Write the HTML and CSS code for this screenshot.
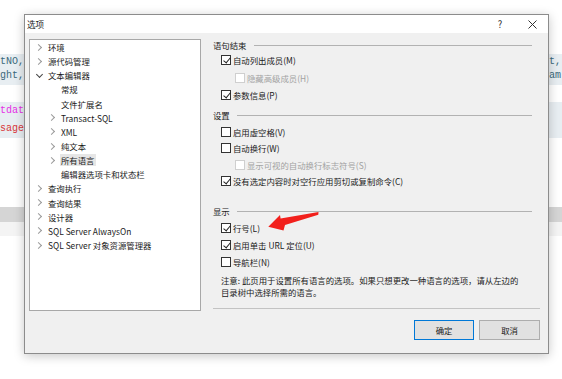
FILE: index.html
```html
<!DOCTYPE html>
<html lang="zh-CN">
<head>
    <meta charset="UTF-8">
    <title>选项</title>
    <link rel="stylesheet" href="styles.css">
</head>
<body>
    <!-- 背后的编辑器 -->
    <div class="editor">
        <div class="band band-a">
            <div class="line"><span class="l teal">tNO,</span><span></span><span class="r teal">t,</span></div>
            <div class="line"><span class="l teal">ght,</span><span></span><span class="r teal">am</span></div>
        </div>
        <div class="band band-b">
            <div class="line"><span class="l pink">tdat</span><span></span><span class="r"></span></div>
            <div class="line"><span class="l red">sage</span><span></span><span class="r"></span></div>
        </div>
        <div class="strip"></div>
        <div class="strip-light"></div>
    </div>

    <div class="dialog">
        <div class="titlebar">
            <span class="title">选项</span>
            <span class="tb-btn">?</span>
            <span class="tb-btn">
                <svg width="9" height="9" viewBox="0 0 9 9"><path d="M0.5 0.5 L8.5 8.5 M8.5 0.5 L0.5 8.5" stroke="#333" stroke-width="1" fill="none"/></svg>
            </span>
        </div>
        <div class="dlg-body">
            <div class="tree">
                <div class="node"><i class="arr"></i><span>环境</span></div>
                <div class="node"><i class="arr"></i><span>源代码管理</span></div>
                <div class="node"><i class="arr open"></i><span>文本编辑器</span></div>
                <div class="node child"><i class="arr none"></i><span>常规</span></div>
                <div class="node child"><i class="arr none"></i><span>文件扩展名</span></div>
                <div class="node child"><i class="arr"></i><span>Transact-SQL</span></div>
                <div class="node child"><i class="arr"></i><span>XML</span></div>
                <div class="node child"><i class="arr"></i><span>纯文本</span></div>
                <div class="node child"><i class="arr"></i><span class="sel">所有语言</span></div>
                <div class="node child"><i class="arr none"></i><span>编辑器选项卡和状态栏</span></div>
                <div class="node"><i class="arr"></i><span>查询执行</span></div>
                <div class="node"><i class="arr"></i><span>查询结果</span></div>
                <div class="node"><i class="arr"></i><span>设计器</span></div>
                <div class="node"><i class="arr"></i><span>SQL Server AlwaysOn</span></div>
                <div class="node"><i class="arr"></i><span>SQL Server 对象资源管理器</span></div>
            </div>

            <div class="panel">
                <div class="group">
                    <div class="group-title"><span>语句结束</span></div>
                    <div class="opt first"><i class="cb on"></i>自动列出成员(M)</div>
                    <div class="opt sub off"><i class="cb"></i>隐藏高级成员(H)</div>
                    <div class="opt"><i class="cb on"></i>参数信息(P)</div>
                </div>
                <div class="group g2">
                    <div class="group-title"><span>设置</span></div>
                    <div class="opt"><i class="cb"></i>启用虚空格(V)</div>
                    <div class="opt"><i class="cb"></i>自动换行(W)</div>
                    <div class="opt sub off"><i class="cb"></i>显示可视的自动换行标志符号(S)</div>
                    <div class="opt"><i class="cb on"></i>没有选定内容时对空行应用剪切或复制命令(C)</div>
                </div>
                <div class="group g3">
                    <div class="group-title"><span>显示</span></div>
                    <div class="opt"><i class="cb on"></i>行号(L)</div>
                    <div class="opt"><i class="cb on"></i>启用单击 URL 定位(U)</div>
                    <div class="opt"><i class="cb"></i>导航栏(N)</div>
                </div>
                <p class="note">注意: 此页用于设置所有语言的选项。如果只想更改一种语言的选项，请从左边的<br>目录树中选择所需的语言。</p>
                <div class="footer">
                    <button class="btn primary">确定</button>
                    <button class="btn">取消</button>
                </div>
            </div>
        </div>
    </div>

    <svg class="mark" width="562" height="379" viewBox="0 0 562 379">
        <polygon points="268.3,226.8 280,215 280.6,218.6 318.5,212 318.3,214.8 285,225 283.5,230.5" fill="#f2201c"/>
    </svg>
</body>
</html>
```

FILE: styles.css
```css
body {
    margin: 0;
    width: 562px;
    height: 379px;
    overflow: hidden;
    position: relative;
    background: #fff;
    font-family: "Noto Sans CJK SC", "Noto Sans", sans-serif;
}

/* 背景编辑器 */
.editor {
    padding-top: 54px;
    font-family: "Liberation Mono", monospace;
    font-size: 10px;
}
.band { background: #e8eef2; }
.band-a { height: 31px; padding-top: 1px; box-sizing: border-box; }
.band-a .line { height: 14px; line-height: 14px; }
.band-b { height: 36px; margin-top: 17px; }
.band-b .line { height: 18px; line-height: 18px; }
.line {
    display: grid;
    grid-template-columns: 24px 1fr 13px;
    white-space: nowrap;
}
.line .l { text-align: right; overflow: hidden; }
.line .r { overflow: hidden; }
.teal { color: #3b6a7c; }
.pink { color: #e62ee6; }
.red { color: #d9373a; }
.strip { height: 15px; margin-top: 69px; background: #d5d5d5; }
.strip-light { height: 14px; background: #f4f4f4; }

/* 对话框 */
.dialog {
    position: absolute;
    left: 24px;
    top: 14px;
    width: 525px;
    height: 340px;
    box-sizing: border-box;
    border: 1px solid #8c8c8c;
    background: #f0f0f0;
    box-shadow: 0 2px 10px rgba(0,0,0,0.22);
    font-size: 8.4px;
    color: #1a1a1a;
    display: flex;
    flex-direction: column;
}
.titlebar {
    height: 18px;
    background: #fff;
    display: flex;
    align-items: center;
    padding-left: 2px;
}
.title { flex: 1; font-size: 8.6px; }
.tb-btn {
    width: 32px;
    text-align: center;
    display: flex;
    justify-content: center;
    align-items: center;
    font-size: 9.5px;
    color: #333;
}
.dlg-body {
    flex: 1;
    display: flex;
    padding: 6px 8px 0 4px;
}

.tree {
    width: 172px;
    height: 272px;
    box-sizing: border-box;
    border: 1px solid #a8a8a8;
    background: #fff;
}
.node {
    height: 14.15px;
    display: flex;
    align-items: center;
    padding-left: 5px;
    white-space: nowrap;
}
.node.child { padding-left: 18px; }
.arr {
    width: 8px;
    height: 8px;
    margin-right: 5px;
    position: relative;
}
.arr::before {
    content: "";
    position: absolute;
    left: 1px;
    top: 1.5px;
    width: 4px;
    height: 4px;
    border-right: 1px solid #9a9a9a;
    border-bottom: 1px solid #9a9a9a;
    transform: rotate(-45deg);
}
.arr.open::before {
    left: 1.5px;
    top: 0.5px;
    border-color: #444;
    transform: rotate(45deg);
}
.arr.none::before { display: none; }
.sel { background: #e6e6e6; padding: 0 1px; margin-left: -1px; }

.panel {
    flex: 1;
    margin-left: 12px;
    margin-top: -1px;
    display: flex;
    flex-direction: column;
}
.group-title {
    height: 14px;
    line-height: 14px;
    display: flex;
    align-items: center;
    margin-right: 8px;
}
.group-title::after {
    content: "";
    flex: 1;
    height: 1px;
    background: #b2b2b2;
    margin-left: 7px;
}
.opt {
    height: 14px;
    line-height: 14px;
    margin-top: 3px;
    padding-left: 8px;
    display: flex;
    align-items: center;
    white-space: nowrap;
}
.opt.first { margin-top: 1px; }
.opt.sub { padding-left: 22px; margin-top: 4px; }
.opt.off { color: #a2a2a2; }
.g2 { margin-top: 6px; }
.g2 .opt { margin-top: 2.5px; }
.g3 { margin-top: 16px; }
.cb {
    width: 10px;
    height: 10px;
    box-sizing: border-box;
    border: 1px solid #333;
    background: #fff;
    margin-right: 2px;
    position: relative;
}
.off .cb { border-color: #cfcfcf; }
.cb.on::after {
    content: "";
    position: absolute;
    left: 2.5px;
    top: 0;
    width: 3px;
    height: 6px;
    border-right: 1px solid #222;
    border-bottom: 1px solid #222;
    transform: rotate(40deg);
}
.note {
    margin: 5px 0 0 8px;
    line-height: 12px;
    white-space: nowrap;
}
.footer {
    margin-top: 10px;
    border-top: 1px solid #c3c3c3;
    padding-top: 11px;
    display: flex;
    justify-content: flex-end;
    gap: 5px;
}
.btn {
    width: 61px;
    height: 20px;
    padding: 0;
    border: 1px solid #adadad;
    background: #e1e1e1;
    font-family: inherit;
    font-size: 8.4px;
    color: #1a1a1a;
}
.btn.primary { border-color: #0078d7; width: 60px; }

.mark {
    position: absolute;
    left: 0;
    top: 0;
    pointer-events: none;
}
```
